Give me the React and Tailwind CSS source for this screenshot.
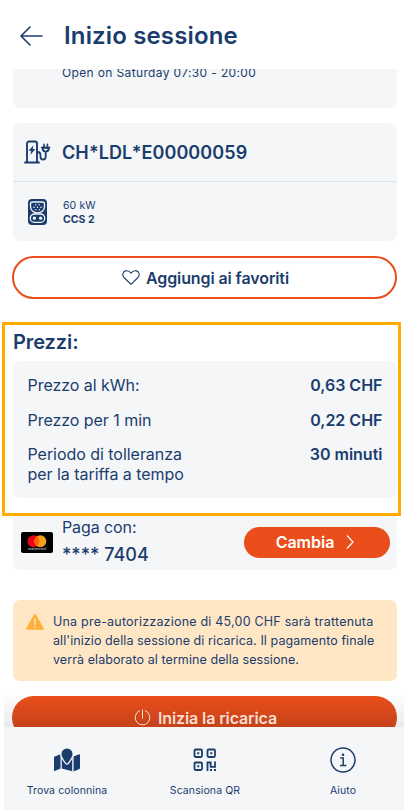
// Session start screen
const prices = [
  { label: 'Prezzo al kWh:', value: '0,63 CHF' },
  { label: 'Prezzo per 1 min', value: '0,22 CHF' },
  { label: 'Periodo di tolleranza per la tariffa a tempo', value: '30 minuti' },
];

function ArrowLeft() {
  return (
    <svg className="h-[22px] w-[23px]" viewBox="0 0 23 22" fill="none" stroke="currentColor" strokeWidth="1.6" strokeLinecap="round" strokeLinejoin="round">
      <path d="M22 11H1M10 2 1 11l9 9" />
    </svg>
  );
}

function ChargerIcon() {
  return (
    <svg className="h-6 w-[27px] shrink-0" viewBox="0 0 27 24" fill="none" stroke="currentColor" strokeWidth="1.9" strokeLinecap="round" strokeLinejoin="round">
      <path d="M1 22.500h14M3 22.500V3.500a2 2 0 0 1 2-2h6a2 2 0 0 1 2 2v19" />
      <path d="M13.500 12c2 0 3 1 3 3v1.700c0 1.900 1 2.800 2.500 2.800s2.700-1 2.700-2.800V13" strokeWidth="1.800" />
      <path d="M18.700 7.800v.8a3 3 0 0 0 6 0v-.8z" strokeWidth="1.900" />
      <path d="M17.700 7.500h8M20 4.200v2.500M23.400 4.200v2.500" strokeWidth="1.600" />
      <path d="M9.500 5.300 4.500 10.800h2.700L6.400 14.700l5-5.600H8.700z" fill="currentColor" stroke="none" />
    </svg>
  );
}

function PlugIcon() {
  return (
    <svg className="h-[26px] w-[19px] shrink-0" viewBox="0 0 19 26" fill="none">
      <rect width="19" height="26" rx="4" fill="currentColor" />
      <path d="M4.500 3h10c1.300 0 2 .8 2 2v2.500c0 3.500-2.800 6.300-7 6.300s-7-2.800-7-6.300V5c0-1.200.7-2 2-2z" stroke="#f4f6f8" strokeWidth="1.300" />
      <rect x="2.300" y="15" width="14.400" height="8.300" rx="4.150" stroke="#f4f6f8" strokeWidth="1.300" />
      <g fill="#f4f6f8">
        <circle cx="7.800" cy="5.800" r=".7" />
        <circle cx="11.200" cy="5.800" r=".7" />
        <circle cx="6" cy="8.200" r=".8" />
        <circle cx="9.500" cy="8.200" r=".8" />
        <circle cx="13" cy="8.200" r=".8" />
        <circle cx="7.800" cy="10.800" r=".7" />
        <circle cx="11.200" cy="10.800" r=".7" />
        <circle cx="6.400" cy="19.200" r="1.600" />
        <circle cx="12.600" cy="19.200" r="1.600" />
      </g>
    </svg>
  );
}

function HeartIcon() {
  return (
    <svg className="h-[15px] w-[18px]" viewBox="0 0 18 15" fill="none" stroke="currentColor" strokeWidth="1.100" strokeLinejoin="round">
      <path d="M9 14.300 2 7.500C-.2 5 .8 1.600 3.600.9 5.800.4 7.700 1.200 9 3.200 10.300 1.200 12.200.4 14.400.9c2.800.7 3.800 4.100 1.600 6.600z" />
    </svg>
  );
}

function PowerIcon() {
  return (
    <svg className="h-[17px] w-[17px]" viewBox="0 0 17 17" fill="none" stroke="currentColor" strokeWidth="1" strokeLinecap="round">
      <path d="M8.500.8v8.400M5.600 1.700a7.400 7.400 0 1 0 5.800 0" />
    </svg>
  );
}

function CardLogo() {
  return (
    <svg className="h-[21px] w-8 shrink-0" viewBox="0 0 32 21">
      <rect width="32" height="21" rx="2" fill="#000" />
      <circle cx="12.500" cy="9.200" r="6" fill="#eb001b" />
      <circle cx="19.300" cy="9.200" r="6" fill="#f79e1b" />
      <path d="M15.900 4.300a6 6 0 0 1 0 9.800 6 6 0 0 1 0-9.800z" fill="#ff5f00" />
      <text x="16" y="18.300" textAnchor="middle" fontSize="3.400" fill="#ddd" fontFamily="Inter, sans-serif">mastercard</text>
    </svg>
  );
}

function WarningIcon() {
  return (
    <svg className="mt-[14px] h-4 w-[18px] shrink-0" viewBox="0 0 18 16">
      <path d="M7.900.7a1.250 1.250 0 0 1 2.200 0l7.500 13.300c.5.9 0 1.700-1 1.700H1.400c-1 0-1.500-.8-1-1.700z" fill="#ffb03b" />
      <path d="M9 5.300v5" stroke="#ffe7c5" strokeWidth="1.500" strokeLinecap="round" />
      <circle cx="9" cy="13" r=".9" fill="#ffe7c5" />
    </svg>
  );
}

function MapIcon() {
  return (
    <svg className="h-[24px] w-[26px]" viewBox="0 0 26 24" fill="currentColor">
      <path d="M0 9.400c0-.5.200-.8.700-1L6.500 6.200v14.400L.8 23c-.5.200-.8 0-.8-.5z" />
      <path d="M7.800 7v13.600l10.400 2.700V7z" />
      <path d="M19.600 8.600 25.200 6.300c.5-.2.800 0 .8.500v13.300c0 .5-.2.800-.7 1l-5.700 2.400z" />
      <path d="M13 .5a5.500 5.500 0 0 1 5.500 5.500c0 2.600-2.800 6.600-4.700 9a1 1 0 0 1-1.600 0C10.300 12.600 7.500 8.600 7.500 6A5.500 5.500 0 0 1 13 .5z" stroke="#f4f6f8" strokeWidth="2.600" paintOrder="stroke" />
    </svg>
  );
}

function QrIcon() {
  return (
    <svg className="h-[24px] w-[24px]" viewBox="0 0 24 24" fill="none" stroke="currentColor" strokeWidth="1.800">
      <rect x="1.500" y="1.500" width="7.500" height="7.500" rx="1.200" />
      <rect x="14.500" y="1.500" width="7.500" height="7.500" rx="1.200" />
      <rect x="1.500" y="14.500" width="7.500" height="7.500" rx="1.200" />
      <path d="M14.500 23v-8.500H17.700v4.300H22v-5.300" />
      <g fill="currentColor" stroke="none">
        <rect x="4.250" y="4.250" width="2" height="2" />
        <rect x="17.250" y="4.250" width="2" height="2" />
        <rect x="4.250" y="17.250" width="2" height="2" />
        <rect x="17" y="21" width="2" height="2" />
        <rect x="21" y="21" width="2" height="2" />
      </g>
    </svg>
  );
}

function InfoIcon() {
  return (
    <svg className="h-[26px] w-[26px]" viewBox="0 0 26 26" fill="none" stroke="currentColor" strokeWidth="1.500">
      <circle cx="13" cy="13" r="12" />
      <path d="M10.300 11h2.900v7.500M10 18.600h6.400" />
      <circle cx="13" cy="7.700" r="1.300" fill="currentColor" stroke="none" />
    </svg>
  );
}

const navItems = [
  { label: 'Trova colonnina', icon: <MapIcon /> },
  { label: 'Scansiona QR', icon: <QrIcon /> },
  { label: 'Aiuto', icon: <InfoIcon /> },
];

export default function App() {
  return (
    <div className="flex h-[810px] w-[404px] flex-col overflow-hidden bg-white font-['Inter',sans-serif] text-[#1b3d6d]">
      <header className="flex h-[69px] shrink-0 items-center gap-[21px] pt-[2px] pl-5">
        <button aria-label="Indietro"><ArrowLeft /></button>
        <h1 className="text-2xl font-semibold tracking-[0.15px]">Inizio sessione</h1>
      </header>

      <main className="flex min-h-0 flex-1 flex-col overflow-hidden">
        <div className="mr-[7px] ml-[13px] h-[39px] shrink-0 overflow-hidden rounded-b-[7px] bg-[#f4f6f8] pl-[49px]">
          <p className="-mt-[5px] text-[12px] leading-[18px] tracking-[0.36px]">Open on Saturday 07:30 - 20:00</p>
        </div>

        <section className="mt-[15px] mr-[7px] ml-[13px] flex h-[118px] shrink-0 flex-col rounded-[7px] bg-[#f4f6f8]">
          <div className="flex h-[59px] items-center gap-[11px] border-b border-[#dbe4ec] pl-[11px]">
            <ChargerIcon />
            <span className="pt-[2px] text-lg font-semibold tracking-[0.1px]">CH*LDL*E00000059</span>
          </div>
          <div className="flex flex-1 items-center gap-4 pl-[15px]">
            <PlugIcon />
            <div className="pt-[2px] text-[10.5px] leading-[14px]">
              <p className="tracking-[0.1px]">60 kW</p>
              <p className="font-bold">CCS 2</p>
            </div>
          </div>
        </section>

        <button className="mt-[15px] mr-[7px] ml-[12px] flex h-[43px] shrink-0 items-center justify-center gap-[6px] rounded-full border-2 border-[#e94e1b] pl-[2px] text-base font-semibold tracking-[-0.1px]">
          <HeartIcon />
          Aggiungi ai favoriti
        </button>

        <section className="mt-[23px] mr-[3px] ml-[2px] flex h-[194px] shrink-0 flex-col border-3 border-[#ffab00] px-[1px] pl-[8px]">
          <h2 className="mt-[4px] text-xl leading-[26px] font-semibold tracking-[-0.1px]">Prezzi:</h2>
          <dl className="mt-[6px] flex h-[137px] flex-col gap-[14.500px] rounded-[7px] bg-[#f4f6f8] pt-[14px] pr-[14.500px] pl-[14.500px] text-base leading-5">
            {prices.map((price) => (
              <div key={price.label} className="flex justify-between">
                <dt className="max-w-[170px] tracking-[-0.04px]">{price.label}</dt>
                <dd className="font-semibold">{price.value}</dd>
              </div>
            ))}
          </dl>
        </section>

        <section className="mr-[7px] ml-[13px] flex h-[54px] shrink-0 items-center rounded-b-[7px] bg-[#f4f6f8] pr-[7px] pb-[2px] pl-2">
          <CardLogo />
          <div className="ml-[9px] flex-1 pb-[1px]">
            <p className="text-base leading-[26px] tracking-[-0.1px]">Paga con:</p>
            <p className="text-lg leading-[30px] font-medium">**** 7404</p>
          </div>
          <button className="flex h-[31px] w-[146px] items-center justify-center gap-3 rounded-full bg-[#e94e1b] pr-[4px] text-base font-semibold text-white">
            Cambia
            <svg className="h-[14px] w-[8px]" viewBox="0 0 8 14" fill="none" stroke="currentColor" strokeWidth="1.200">
              <path d="m1 .5 6 6.500-6 6.500" />
            </svg>
          </button>
        </section>

        <section className="mt-[30px] mr-[7px] ml-[13px] flex h-[81px] shrink-0 gap-[9px] rounded-[7px] bg-[#ffe7c5] pl-[13px]">
          <WarningIcon />
          <p className="mt-3 text-[12.5px] leading-[19px] tracking-[0.08px] whitespace-nowrap">
            <span className="tracking-[0.21px]">Una pre-autorizzazione di 45,00 CHF sarà trattenuta</span><br />
            all'inizio della sessione di ricarica. Il pagamento finale<br />
            verrà elaborato al termine della sessione.
          </p>
        </section>

        {/* the start button slides under the bottom bar */}
        <div className="ml-1 flex-1 bg-linear-to-b from-white from-20% to-[#e3e3e3] pt-[15px] pr-[7px] pl-[8px]">
          <button className="flex h-[43px] w-full items-center justify-center gap-[7px] rounded-full bg-linear-to-b from-[#e94e1b] to-[#b83e19] pl-[2px] text-base font-semibold tracking-[-0.1px] text-[#fbded3]">
            <PowerIcon />
            Inizia la ricarica
          </button>
        </div>
      </main>

      <nav className="ml-1 flex h-[83px] shrink-0 justify-between bg-[#f4f6f8] pl-[2px]">
        {navItems.map((item) => (
          <button key={item.label} className="flex w-[122px] flex-col items-center pt-5 text-[10.5px]">
            <span className="flex h-[26px] items-center">{item.icon}</span>
            <span className="mt-[10px] leading-4 tracking-[0.1px]">{item.label}</span>
          </button>
        ))}
      </nav>
    </div>
  );
}
